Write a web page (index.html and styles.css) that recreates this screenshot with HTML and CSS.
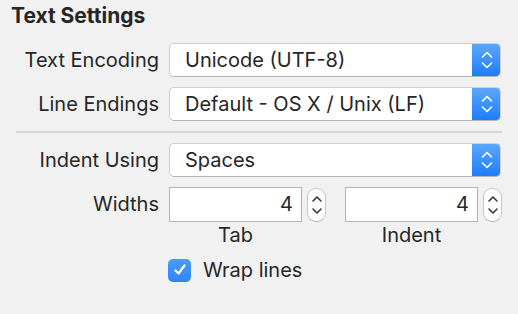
FILE: index.html
```html
<!doctype html>
<html>
 <head>
	<meta charset="UTF-8">
	<title>Text Settings</title>
	<link rel="stylesheet" href="styles.css">
 </head>
 <body>
	<div class="panel">
		<h2>Text Settings</h2>
		<div class="row">
			<span class="label">Text Encoding</span>
			<div class="popup">
				<span class="value">Unicode (UTF-8)</span>
				<span class="arrows">
					<svg width="12" height="18" viewBox="0 0 12 18"><path d="M1.5 6 L6 1.5 L10.5 6 M1.5 12 L6 16.5 L10.5 12" fill="none" stroke="#fff" stroke-width="1.6" stroke-linecap="round" stroke-linejoin="round"/></svg>
				</span>
			</div>
		</div>
		<div class="row">
			<span class="label">Line Endings</span>
			<div class="popup">
				<span class="value">Default - OS X / Unix (LF)</span>
				<span class="arrows">
					<svg width="12" height="18" viewBox="0 0 12 18"><path d="M1.5 6 L6 1.5 L10.5 6 M1.5 12 L6 16.5 L10.5 12" fill="none" stroke="#fff" stroke-width="1.6" stroke-linecap="round" stroke-linejoin="round"/></svg>
				</span>
			</div>
		</div>
		<div class="sep"></div>
		<div class="row">
			<span class="label">Indent Using</span>
			<div class="popup">
				<span class="value">Spaces</span>
				<span class="arrows">
					<svg width="12" height="18" viewBox="0 0 12 18"><path d="M1.5 6 L6 1.5 L10.5 6 M1.5 12 L6 16.5 L10.5 12" fill="none" stroke="#fff" stroke-width="1.6" stroke-linecap="round" stroke-linejoin="round"/></svg>
				</span>
			</div>
		</div>
		<div class="row widths">
			<span class="label">Widths</span>
			<div class="num">
				<div class="numrow">
					<div class="field">4</div>
					<div class="stepper">
						<svg width="12" height="22" viewBox="0 0 12 22"><path d="M2 7 L6 3 L10 7 M2 15 L6 19 L10 15" fill="none" stroke="#333" stroke-width="1.6" stroke-linecap="round" stroke-linejoin="round"/></svg>
					</div>
				</div>
				<div class="cap">Tab</div>
			</div>
			<div class="num">
				<div class="numrow">
					<div class="field">4</div>
					<div class="stepper">
						<svg width="12" height="22" viewBox="0 0 12 22"><path d="M2 7 L6 3 L10 7 M2 15 L6 19 L10 15" fill="none" stroke="#333" stroke-width="1.6" stroke-linecap="round" stroke-linejoin="round"/></svg>
					</div>
				</div>
				<div class="cap">Indent</div>
			</div>
		</div>
		<div class="row check">
			<span class="label"></span>
			<span class="box">
				<svg width="16" height="16" viewBox="0 0 16 16"><path d="M3.5 8.5 L6.5 11.5 L12.5 3.5" fill="none" stroke="#fff" stroke-width="2.2" stroke-linecap="round" stroke-linejoin="round"/></svg>
			</span>
			<span class="checktext">Wrap lines</span>
		</div>
	</div>
 </body>
</html>
```
FILE: styles.css
```css
body{
	margin:0;
	background:#f1f1f1;
	font-family:Inter,"Liberation Sans",sans-serif;
	font-size:20px;
	color:#262626;
}
.panel{
	width:518px;
	height:314px;
	padding:3px 0 0 0;
	box-sizing:border-box;
}
h2{
	margin:0 0 0 11px;
	font-size:21px;
	font-weight:bold;
	height:40px;
	line-height:25px;
}
.row{
	display:flex;
	align-items:center;
	margin-bottom:10px;
}
.label{
	width:159px;
	text-align:right;
	margin-right:10px;
	flex:none;
}
/*弹出菜单*/
.popup{
	width:332px;
	height:34px;
	box-sizing:border-box;
	display:flex;
	align-items:center;
	background:#fff;
	border:1px solid #cfcfcf;
	border-bottom-color:#b5b5b5;
	border-radius:5px;
	overflow:hidden;
}
.popup .value{
	flex:1;
	padding-left:15px;
}
.arrows{
	width:29px;
	height:34px;
	margin-right:-1px;
	flex:none;
	display:flex;
	align-items:center;
	justify-content:center;
	background:linear-gradient(#5ea8fc,#1b7cf8);
}
.sep{
	height:2px;
	background:#d4d4d4;
	margin:0 16px 10px 16px;
}
.widths{
	align-items:flex-start;
	margin-bottom:11px;
}
.widths .label{
	line-height:35px;
}
.num{
	display:flex;
	flex-direction:column;
	margin-right:19px;
}
.numrow{
	display:flex;
	align-items:center;
}
.field{
	width:133px;
	height:35px;
	box-sizing:border-box;
	border:1px solid #b4b4b4;
	background:#fff;
	text-align:right;
	padding-right:8px;
	line-height:33px;
}
.stepper{
	width:19px;
	height:34px;
	margin-left:5px;
	box-sizing:border-box;
	border:1px solid #c8c8c8;
	border-bottom-color:#b0b0b0;
	border-radius:9px;
	background:#fff;
	display:flex;
	align-items:center;
	justify-content:center;
}
.cap{
	width:133px;
	text-align:center;
	line-height:24px;
	margin-top:1px;
}
.check .label{
	margin-right:9px;
}
.box{
	width:23px;
	height:23px;
	border-radius:5px;
	background:linear-gradient(#4c9af8,#2f86f6);
	display:flex;
	align-items:center;
	justify-content:center;
	flex:none;
}
.checktext{
	margin-left:12px;
}
```
